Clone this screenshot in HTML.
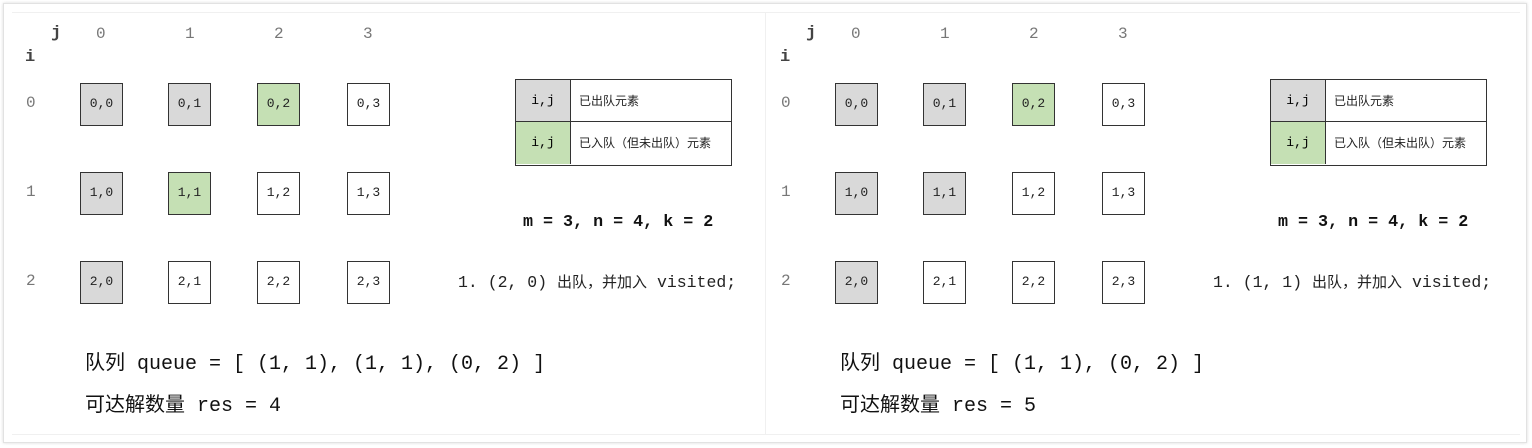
<!DOCTYPE html>
<html><head><meta charset="utf-8"><style>
html,body{margin:0;padding:0;background:#fff;}
body{width:1532px;height:448px;position:relative;overflow:hidden;font-family:"Liberation Mono","Noto Sans CJK SC",monospace;}
.card{position:absolute;left:3px;top:3px;width:1524px;height:440px;border:1px solid #e2e2e2;box-shadow:0 0 3px rgba(0,0,0,.15);box-sizing:border-box;}
.hl{position:absolute;height:1px;background:#f0f0f0;}
.vl{position:absolute;width:1px;background:#f0f0f0;}
.p{position:absolute;top:0;left:0;width:766px;height:448px;}
.t{position:absolute;white-space:nowrap;}
.lab{color:#777;font-size:16px;}
.b{position:absolute;width:43px;height:43px;border:1.5px solid #333;box-sizing:border-box;font-size:13px;line-height:40px;text-align:center;color:#222;background:#fff;}
.g{background:#d9d9d9;}
.gr{background:#c5e0b4;}
.leg{position:absolute;left:515px;top:79px;width:217px;height:87px;border:1.5px solid #333;box-sizing:border-box;}
.leg div{position:absolute;box-sizing:border-box;}
.cj{font-family:"Liberation Sans","Noto Sans CJK SC",sans-serif;}
</style></head><body>
<div class="card"></div>
<div class="hl" style="left:12px;top:12px;width:1508px"></div>
<div class="hl" style="left:12px;top:434px;width:1508px"></div>
<div class="vl" style="left:765px;top:12px;height:422px"></div>

<div class="p" id="p1">
 <div class="t" style="left:51px;top:24px;font-size:17px;font-weight:bold;color:#444">j</div>
 <div class="t" style="left:25px;top:48px;font-size:17px;font-weight:bold;color:#444">i</div>
 <div class="t lab" style="left:96px;top:25px">0</div>
 <div class="t lab" style="left:185px;top:25px">1</div>
 <div class="t lab" style="left:274px;top:25px">2</div>
 <div class="t lab" style="left:363px;top:25px">3</div>
 <div class="t lab" style="left:26px;top:94px">0</div>
 <div class="t lab" style="left:26px;top:183px">1</div>
 <div class="t lab" style="left:26px;top:272px">2</div>
 <div class="b g" style="left:80px;top:83px">0,0</div>
 <div class="b g" style="left:168px;top:83px">0,1</div>
 <div class="b gr" style="left:257px;top:83px">0,2</div>
 <div class="b" style="left:347px;top:83px">0,3</div>
 <div class="b g" style="left:80px;top:172px">1,0</div>
 <div class="b gr" style="left:168px;top:172px">1,1</div>
 <div class="b" style="left:257px;top:172px">1,2</div>
 <div class="b" style="left:347px;top:172px">1,3</div>
 <div class="b g" style="left:80px;top:261px">2,0</div>
 <div class="b" style="left:168px;top:261px">2,1</div>
 <div class="b" style="left:257px;top:261px">2,2</div>
 <div class="b" style="left:347px;top:261px">2,3</div>
 <div class="leg">
  <div style="left:0;top:0;width:55px;height:42px;background:#d9d9d9;border-right:1.5px solid #333;border-bottom:1.5px solid #333;font-size:13px;line-height:42px;text-align:center">i,j</div>
  <div style="left:0;top:42px;width:55px;height:42px;background:#c5e0b4;border-right:1.5px solid #333;font-size:13px;line-height:42px;text-align:center">i,j</div>
  <div style="left:55px;top:0;width:160px;height:42px;border-bottom:1.5px solid #333"></div>
  <div class="cj" style="left:63px;top:0;font-size:12px;line-height:42px;color:#222">已出队元素</div>
  <div class="cj" style="left:63px;top:42px;font-size:12px;line-height:42px;color:#222">已入队（但未出队）元素</div>
 </div>
 <div class="t" style="left:523px;top:213px;font-size:16.7px;font-weight:bold;color:#111">m = 3, n = 4, k = 2</div>
 <div class="t" style="left:458px;top:271px;font-size:16.5px;color:#222">1. (2, 0) <span class="cj" style="font-size:15px">出队，并加入</span> visited;</div>
 <div class="t" style="left:85px;top:346px;font-size:20px;color:#111"><span class="cj">队列</span> queue = [ (1, 1), (1, 1), (0, 2) ]</div>
 <div class="t" style="left:85px;top:388px;font-size:20px;color:#111"><span class="cj">可达解数量</span> res = 4</div>
</div>

<div class="p" id="p2" style="left:755px">
 <div class="t" style="left:51px;top:24px;font-size:17px;font-weight:bold;color:#444">j</div>
 <div class="t" style="left:25px;top:48px;font-size:17px;font-weight:bold;color:#444">i</div>
 <div class="t lab" style="left:96px;top:25px">0</div>
 <div class="t lab" style="left:185px;top:25px">1</div>
 <div class="t lab" style="left:274px;top:25px">2</div>
 <div class="t lab" style="left:363px;top:25px">3</div>
 <div class="t lab" style="left:26px;top:94px">0</div>
 <div class="t lab" style="left:26px;top:183px">1</div>
 <div class="t lab" style="left:26px;top:272px">2</div>
 <div class="b g" style="left:80px;top:83px">0,0</div>
 <div class="b g" style="left:168px;top:83px">0,1</div>
 <div class="b gr" style="left:257px;top:83px">0,2</div>
 <div class="b" style="left:347px;top:83px">0,3</div>
 <div class="b g" style="left:80px;top:172px">1,0</div>
 <div class="b g" style="left:168px;top:172px">1,1</div>
 <div class="b" style="left:257px;top:172px">1,2</div>
 <div class="b" style="left:347px;top:172px">1,3</div>
 <div class="b g" style="left:80px;top:261px">2,0</div>
 <div class="b" style="left:168px;top:261px">2,1</div>
 <div class="b" style="left:257px;top:261px">2,2</div>
 <div class="b" style="left:347px;top:261px">2,3</div>
 <div class="leg">
  <div style="left:0;top:0;width:55px;height:42px;background:#d9d9d9;border-right:1.5px solid #333;border-bottom:1.5px solid #333;font-size:13px;line-height:42px;text-align:center">i,j</div>
  <div style="left:0;top:42px;width:55px;height:42px;background:#c5e0b4;border-right:1.5px solid #333;font-size:13px;line-height:42px;text-align:center">i,j</div>
  <div style="left:55px;top:0;width:160px;height:42px;border-bottom:1.5px solid #333"></div>
  <div class="cj" style="left:63px;top:0;font-size:12px;line-height:42px;color:#222">已出队元素</div>
  <div class="cj" style="left:63px;top:42px;font-size:12px;line-height:42px;color:#222">已入队（但未出队）元素</div>
 </div>
 <div class="t" style="left:523px;top:213px;font-size:16.7px;font-weight:bold;color:#111">m = 3, n = 4, k = 2</div>
 <div class="t" style="left:458px;top:271px;font-size:16.5px;color:#222">1. (1, 1) <span class="cj" style="font-size:15px">出队，并加入</span> visited;</div>
 <div class="t" style="left:85px;top:346px;font-size:20px;color:#111"><span class="cj">队列</span> queue = [ (1, 1), (0, 2) ]</div>
 <div class="t" style="left:85px;top:388px;font-size:20px;color:#111"><span class="cj">可达解数量</span> res = 5</div>
</div>
</body></html>
